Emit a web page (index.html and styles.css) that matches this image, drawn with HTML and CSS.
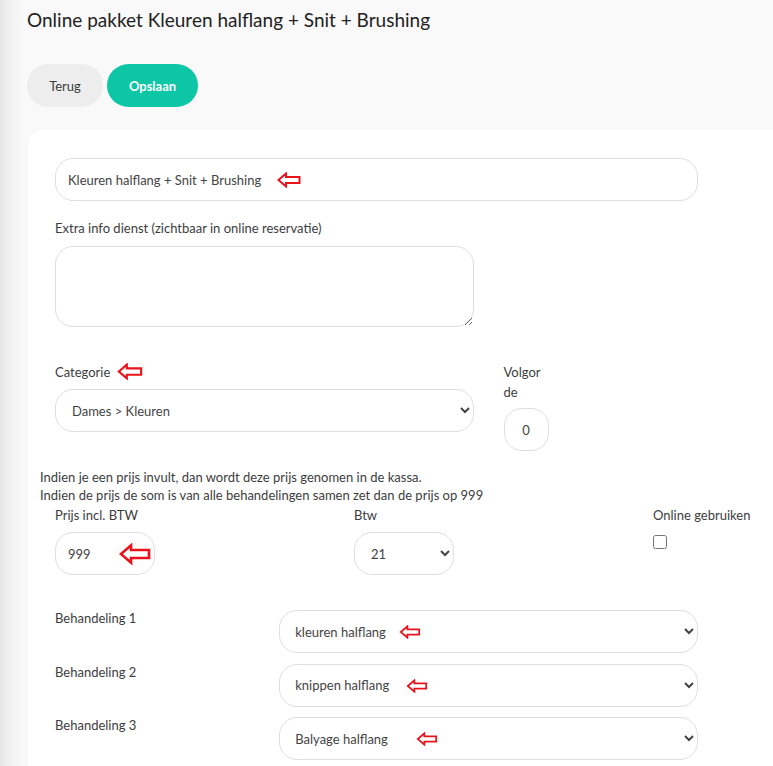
FILE: index.html
```html
<!DOCTYPE html>
<html lang="nl">
<head>
<meta charset="UTF-8" />
<meta name="viewport" content="width=device-width,initial-scale=1" />
<title>Online pakket</title>
<link rel="stylesheet" href="styles.css">
</head>

<body>
<div class="page">
    <h1 class="page-title">Online pakket Kleuren halflang + Snit + Brushing</h1>

    <div class="actions">
        <button class="btn btn-back">Terug</button>
        <button class="btn btn-save">Opslaan</button>
    </div>

    <div class="card">
        <!-- naam -->
        <div class="row group">
            <div class="col-9">
                <div class="field">
                    <input class="form-control" type="text" value="Kleuren halflang + Snit + Brushing">
                    <svg class="mark mark-name" width="24" height="16" viewBox="0 0 24 16"><polygon points="1.5,8 9,1.5 9,5 22.5,5 22.5,11 9,11 9,14.5" /></svg>
                </div>
            </div>
        </div>

        <!-- extra info -->
        <div class="row group group-wide">
            <div class="col-6">
                <label class="label">Extra info dienst (zichtbaar in online reservatie)</label>
                <textarea class="form-control textarea"></textarea>
            </div>
        </div>

        <!-- categorie + volgorde -->
        <div class="row group">
            <div class="col-6">
                <label class="label label-cat">Categorie
                    <svg class="mark mark-cat" width="26" height="17" viewBox="0 0 24 16"><polygon points="1.5,8 9,1.5 9,5 22.5,5 22.5,11 9,11 9,14.5" /></svg>
                </label>
                <select class="form-control select">
                    <option>Dames &gt; Kleuren</option>
                </select>
            </div>
            <div class="col-1">
                <label class="label label-narrow">Volgor<wbr>de</label>
                <input class="form-control small-input" type="text" value="0">
            </div>
        </div>

        <p class="hint">Indien je een prijs invult, dan wordt deze prijs genomen in de kassa.<br>
        Indien de prijs de som is van alle behandelingen samen zet dan de prijs op 999</p>

        <!-- prijs / btw / online -->
        <div class="row group group-price">
            <div class="col-4">
                <label class="label">Prijs incl. BTW</label>
                <div class="field field-price">
                    <input class="form-control price-input" type="text" value="999">
                    <svg class="mark mark-price" width="32" height="26" viewBox="0 0 24 16"><polygon points="1.5,8 9,1.5 9,5 22.5,5 22.5,11 9,11 9,14.5" /></svg>
                </div>
            </div>
            <div class="col-4">
                <label class="label">Btw</label>
                <select class="form-control select price-input">
                    <option>21</option>
                </select>
            </div>
            <div class="col-4">
                <label class="label">Online gebruiken</label>
                <input class="check" type="checkbox">
            </div>
        </div>

        <!-- behandelingen -->
        <div class="row treatment">
            <div class="col-3"><span class="treatment-label">Behandeling 1</span></div>
            <div class="col-6">
                <div class="field">
                    <select class="form-control select select-treat"><option>kleuren halflang</option></select>
                    <svg class="mark mark-t1" width="24" height="14" viewBox="0 0 24 16"><polygon points="1.5,8 9,1.5 9,5 22.5,5 22.5,11 9,11 9,14.5" /></svg>
                </div>
            </div>
        </div>
        <div class="row treatment">
            <div class="col-3"><span class="treatment-label">Behandeling 2</span></div>
            <div class="col-6">
                <div class="field">
                    <select class="form-control select select-treat"><option>knippen halflang</option></select>
                    <svg class="mark mark-t2" width="28" height="14" viewBox="0 0 24 16"><polygon points="1.5,8 9,1.5 9,5 22.5,5 22.5,11 9,11 9,14.5" /></svg>
                </div>
            </div>
        </div>
        <div class="row treatment">
            <div class="col-3"><span class="treatment-label">Behandeling 3</span></div>
            <div class="col-6">
                <div class="field">
                    <select class="form-control select select-treat"><option>Balyage halflang</option></select>
                    <svg class="mark mark-t3" width="28" height="14" viewBox="0 0 24 16"><polygon points="1.5,8 9,1.5 9,5 22.5,5 22.5,11 9,11 9,14.5" /></svg>
                </div>
            </div>
        </div>
    </div>
</div>
</body>
</html>
```

FILE: styles.css
```css
*{margin:0;padding:0;box-sizing:border-box}
html,body{overflow:hidden;height:100%}
body{
    background: linear-gradient(to right, #e6e6e6 0, #f2f2f2 12px, #f9f9f9 24px, #f9f9f9 100%);
    font-family: Lato, "Open Sans", Arial, sans-serif;
    color: #3d3d3d;
    font-size: 13px;
}
.page{
    padding: 9px 0 0 0;
    height: 100%;
    overflow: hidden;
}
.page-title{
    font-size: 19px;
    font-weight: normal;
    line-height: 22px;
    color: #222;
    margin-left: 27px;
    margin-bottom: 33px;
}
.actions{
    display: flex;
    gap: 4px;
    margin-left: 27px;
    margin-bottom: 23px;
}
.btn{
    height: 43px;
    border: none;
    border-radius: 22px;
    font-family: inherit;
    font-size: 13px;
    cursor: pointer;
}
.btn-back{
    width: 76px;
    background: #ededed;
    color: #3a3a3a;
}
.btn-save{
    width: 91px;
    background: #0cc6a6;
    color: #fff;
    font-weight: bold;
}
.card{
    margin-left: 28px;
    background: #fff;
    border-radius: 16px 0 0 0;
    padding: 28px 0 0 12px;
    height: 100%;
    overflow: hidden;
}
.row{
    display: grid;
    grid-template-columns: repeat(12, 74.75px);
    width: 897px;
}
.col-1{grid-column: span 1; padding: 0 15px}
.col-3{grid-column: span 3; padding: 0 15px}
.col-4{grid-column: span 4; padding: 0 15px}
.col-6{grid-column: span 6; padding: 0 15px}
.col-9{grid-column: span 9; padding: 0 15px}

.group{margin-bottom: 17px}
.group-wide{margin-bottom: 35px}
.group-price{margin-bottom: 35px}

.label{
    display: block;
    line-height: 20px;
    height: 20px;
    margin-bottom: 7px;
    color: #3d3d3d;
}
.label-narrow{
    width: 42px;
    height: auto;
    margin-bottom: 6px;
}
.form-control{
    display: block;
    width: 100%;
    height: 43px;
    border: 1px solid #dedede;
    border-radius: 18px;
    padding: 0 12px;
    font-family: inherit;
    font-size: 13px;
    color: #444;
    background: #fff;
    outline: none;
}
.textarea{
    height: 81px;
    padding: 8px 12px;
    margin-top: 8px;
    resize: vertical;
}
.group-wide .label{margin-bottom: 0}
.select{
    padding-left: 12px;
    padding-right: 8px;
}
.select-treat{padding-left: 11px}
.small-input{
    width: 45px;
    text-align: center;
    padding: 0;
}
.price-input{
    width: 100px;
}
.field{
    position: relative;
}
.hint{
    line-height: 18px;
    color: #3d3d3d;
    margin-bottom: 1px;
}
.check{
    display: block;
    width: 14px;
    height: 14px;
    margin-top: 10px;
}
.treatment{margin-bottom: 10.5px}
.treatment-label{
    display: block;
    line-height: 16px;
}

/* rode pijltjes */
.mark polygon{
    fill: #fff;
    stroke: #e8141c;
    stroke-width: 2;
    stroke-linejoin: miter;
}
.mark{position: absolute}
.mark-name{left: 222px; top: 14px}
.mark-cat{position: relative; vertical-align: -3px; margin-left: 3px}
.mark-price{left: 64px; top: 9px}
.mark-t1{left: 119px; top: 15px}
.mark-t2{left: 124px; top: 15px}
.mark-t3{left: 134px; top: 15px}
```
